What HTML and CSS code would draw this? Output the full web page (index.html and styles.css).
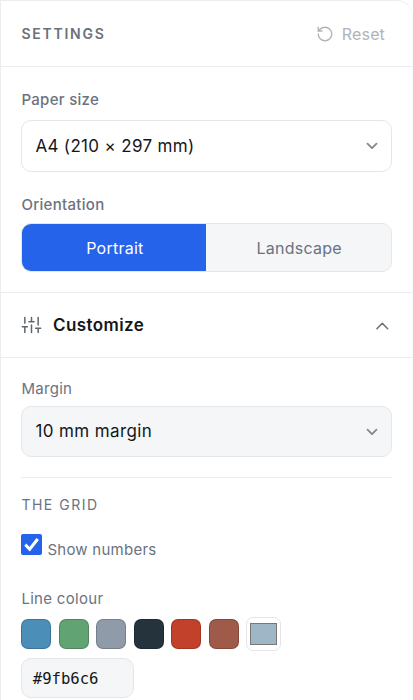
FILE: index.html
```html
<!DOCTYPE html>
<html lang="en">
<head>
<meta charset="utf-8">
<title>Settings</title>
<link rel="stylesheet" href="styles.css">
</head>
<body>
<aside class="panel">
  <header class="head">
    <h2 class="title">SETTINGS</h2>
    <button class="reset" type="button">
      <svg width="18" height="18" viewBox="0 0 24 24" fill="none" stroke="currentColor" stroke-width="1.8" stroke-linecap="round" stroke-linejoin="round"><path d="M3 12a9 9 0 1 0 9-9 9.75 9.75 0 0 0-6.74 2.74L3 8"/><path d="M3 3v5h5"/></svg>
      <span>Reset</span>
    </button>
  </header>

  <section class="basics">
    <div class="label strong">Paper size</div>
    <div class="select paper">
      <span>A4 (210 × 297 mm)</span>
      <svg class="chev" width="12" height="8" viewBox="0 0 12 8"><path d="M1.5 1.7 6 6.2l4.5-4.5"/></svg>
    </div>
    <div class="label strong orient">Orientation</div>
    <div class="segments">
      <button class="seg active" type="button">Portrait</button>
      <button class="seg" type="button">Landscape</button>
    </div>
  </section>

  <div class="customize">
    <svg width="21" height="20" viewBox="0 0 24 24" fill="none" stroke="currentColor" stroke-width="1.8" stroke-linecap="round"><path d="M4 21v-7M4 10V3M12 21v-9M12 8V3M20 21v-5M20 12V3M1 14h6M9 8h6M17 16h6"/></svg>
    <span class="customize-text">Customize</span>
    <svg class="up" width="14" height="9" viewBox="0 0 14 9"><path d="M1.9 7.7 7.3 2.3l5.4 5.4"/></svg>
  </div>

  <section class="options">
    <div class="label">Margin</div>
    <div class="select margin">
      <span>10 mm margin</span>
      <svg class="chev" width="12" height="8" viewBox="0 0 12 8"><path d="M1.5 2.7 6 7.2l4.5-4.5"/></svg>
    </div>
    <div class="rule"></div>
    <h3 class="group">THE GRID</h3>
    <div class="check">
      <span class="box"><svg width="21" height="21" viewBox="0 0 21 21"><path d="M4.3 10.6 8.7 15.2 16.7 5"/></svg></span>
      <span class="check-text">Show numbers</span>
    </div>
    <div class="label colour">Line colour</div>
    <div class="swatches">
      <span class="swatch blue"></span>
      <span class="swatch green"></span>
      <span class="swatch grey"></span>
      <span class="swatch navy"></span>
      <span class="swatch red"></span>
      <span class="swatch brown"></span>
      <span class="picker"><span class="picked"></span></span>
    </div>
    <div class="hex">#9fb6c6</div>
  </section>
</aside>
</body>
</html>
```
FILE: styles.css
```css
* { box-sizing: border-box; }
html { overflow: hidden; background: #fff; }
body { margin: 0; font-family: Inter, sans-serif; color: #15171a; height: 700px; overflow: hidden; }
button { font: inherit; border: 0; background: none; padding: 0; }
h2, h3 { margin: 0; }

.panel {
  height: 720px;
  border: 1px solid #ebecee;
  border-radius: 0 16px 0 0;
  border-right-color: #f8f9fa;
  background: #fff;
}
.head {
  height: 66px;
  padding: 0 27px 0 20.4px;
  border-bottom: 1px solid #ebecee;
  display: flex;
  align-items: center;
  justify-content: space-between;
}
.title { font-size: 14px; font-weight: 600; letter-spacing: 1.75px; color: #6b7078; }
.reset { display: flex; align-items: center; gap: 8px; color: #b0b3b8; font-size: 16px; letter-spacing: .15px; }

.basics { padding: 23px 20px 20px 20.4px; height: 226px; border-bottom: 1px solid #ebecee; }
.label { height: 20px; line-height: 20px; font-size: 15px; letter-spacing: .3px; color: #6b7280; }
.strong { font-weight: 500; }
.select {
  display: flex;
  align-items: center;
  justify-content: space-between;
  padding: 0 12.6px 0 13px;
  border: 1px solid #e4e6e9;
  border-radius: 10px;
  font-size: 17px;
  letter-spacing: .33px;
}
.paper { height: 52px; margin-top: 10px; }
.chev { fill: none; stroke: #83878e; stroke-width: 1.8; stroke-linecap: round; stroke-linejoin: round; }
.orient { margin-top: 23px; }
.segments {
  display: flex;
  height: 49px;
  margin-top: 8px;
  border: 1px solid #e4e6e9;
  border-radius: 10px;
  overflow: hidden;
  background: #f4f6f8;
}
.seg { flex: 1; padding-left: 1px; font-size: 16px; letter-spacing: .25px; color: #6b7280; }
.seg.active { flex: 0 0 184px; background: #2563eb; color: #fff; }

.customize {
  height: 65px;
  padding: 0 23px 0 20px;
  border-bottom: 1px solid #ebecee;
  display: flex;
  align-items: center;
  color: #5f6670;
}
.customize-text { margin-left: 11px; font-size: 17px; font-weight: 600; letter-spacing: .4px; color: #15171a; }
.up { margin-left: auto; fill: none; stroke: #6b6f76; stroke-width: 1.5; stroke-linecap: round; stroke-linejoin: round; }

.options { padding: 21px 20px 0 20.4px; }
.margin { height: 51px; margin-top: 7px; padding-bottom: 1px; background: #f4f6f8; letter-spacing: .4px; }
.rule { height: 1px; margin-top: 20px; background: #ebecee; }
.group { height: 20px; line-height: 20px; margin-top: 17px; font-size: 14px; font-weight: 400; letter-spacing: 1.5px; color: #6b7280; }
.check { display: flex; margin-top: 19px; height: 26px; }
.box { width: 21px; height: 21px; border-radius: 2px; background: #2563eb; }
.box svg { display: block; fill: none; stroke: #fff; stroke-width: 3; }
.check-text { margin: 5px 0 0 5px; line-height: 21px; font-size: 15px; letter-spacing: .25px; color: #6b7280; }
.colour { margin-top: 29px; }
.swatches { display: flex; align-items: center; gap: 7.5px; height: 36px; margin-top: 7px; }
.swatch { width: 30px; height: 30px; border: 1px solid rgba(0, 0, 0, .18); border-radius: 7px; }
.blue { background: #4b8fb8; }
.green { background: #62a374; }
.grey { background: #8f9ba9; }
.navy { background: #25333d; }
.red { background: #c2412a; }
.brown { background: #a05a49; }
.picker { width: 35px; height: 34px; padding: 5px 3px; border: 1px solid #e2e4e8; border-radius: 7px; }
.picked { display: block; height: 22px; background: #9fb6c6; border: 1px solid #777; }
.hex {
  width: 113px;
  height: 40px;
  margin-top: 6px;
  padding-left: 10.4px;
  line-height: 40px;
  border: 1px solid #e4e6e9;
  border-radius: 10px;
  background: #f4f6f8;
  font-family: "DejaVu Sans Mono", monospace;
  font-size: 15.6px;
}
```
